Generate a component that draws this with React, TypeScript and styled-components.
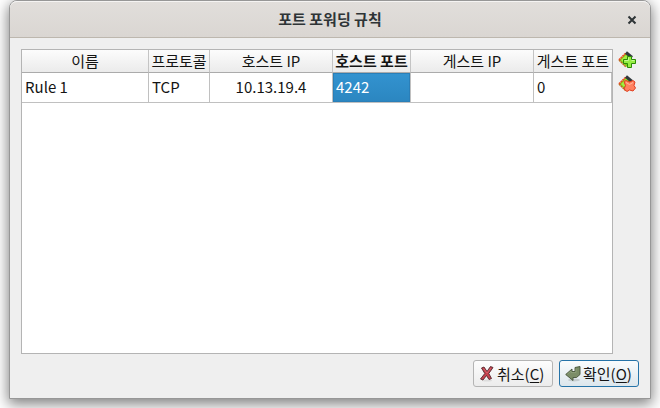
import React from 'react';
import styled, { createGlobalStyle } from 'styled-components';

const Global = createGlobalStyle`
  * { box-sizing: border-box; }
  body {
    margin: 0;
    background: #fff;
    color: #141414;
    font: 15px/20px "Noto Sans CJK KR", sans-serif;
  }
  button { font: inherit; color: inherit; }
`;

const Desktop = styled.div`
  height: 100vh;
  padding: 0 9px 9px;
  overflow: hidden;
`;

const Window = styled.main`
  display: flex;
  flex-direction: column;
  height: 100%;
  border: 1px solid #979797;
  border-radius: 8px 8px 0 0;
  background: #efefef;
  box-shadow: 0 4px 14px 1px rgba(0, 0, 0, 0.5);
`;

const TitleBar = styled.header`
  display: grid;
  grid-template-columns: 36px 1fr 36px;
  align-items: center;
  height: 37px;
  flex: none;
  border-top: 1px solid #f5f4f3;
  border-bottom: 1px solid #bdb7ae;
  border-radius: 7px 7px 0 0;
  background: linear-gradient(#e1dedb, #dad6d2);
`;

const Title = styled.h1`
  margin: 0;
  padding-bottom: 2px;
  text-align: center;
  font-size: 15px;
  line-height: 20px;
  font-weight: 700;
  color: #2e3436;
`;

const CloseButton = styled.button`
  display: grid;
  place-items: center;
  width: 36px;
  height: 32px;
  padding: 0;
  border: 0;
  background: none;
`;

const Content = styled.section`
  display: flex;
  flex: 1;
  min-height: 0;
  padding: 11px 11px 0;
`;

const TableFrame = styled.div`
  flex: 1;
  min-width: 0;
  border: 1px solid #b4b4b4;
  background: #fff;
`;

const RuleTable = styled.table`
  width: 100%;
  table-layout: fixed;
  border-collapse: separate;
  border-spacing: 0;
`;

const HeadCell = styled.th<{ $width?: number; $active?: boolean }>`
  width: ${(p) => (p.$width ? `${p.$width}px` : 'auto')};
  height: 23px;
  padding: 0;
  border-right: 1px solid #c4c4c4;
  border-bottom: 1px solid #ababab;
  background: linear-gradient(#fcfcfc, #ebebeb);
  white-space: nowrap;
  line-height: 20px;
  font-weight: ${(p) => (p.$active ? 700 : 400)};
  &:last-child { border-right: 0; }
`;

const Cell = styled.td<{ $selected?: boolean; $center?: boolean }>`
  height: 30px;
  padding: 0 3px 2px;
  border-right: 1px solid #c0c0c0;
  border-bottom: 1px solid #c0c0c0;
  text-align: ${(p) => (p.$center ? 'center' : 'left')};
  color: ${(p) => (p.$selected ? '#fff' : 'inherit')};
  background: ${(p) => (p.$selected ? 'linear-gradient(#3393d0, #2b86c0)' : '#fff')};
  box-shadow: ${(p) => (p.$selected ? 'inset 0 0 0 1px #2a7fb8' : 'none')};
`;

const Tools = styled.div`
  display: flex;
  flex-direction: column;
  gap: 4px;
  width: 26px;
  padding: 1px 0 0 4px;
`;

const ToolButton = styled.button`
  display: grid;
  place-items: center;
  width: 20px;
  height: 20px;
  padding: 0;
  border: 0;
  background: none;
`;

const Footer = styled.footer`
  display: flex;
  justify-content: flex-end;
  gap: 6px;
  padding: 6px 11px 11px;
`;

const DialogButton = styled.button<{ $primary?: boolean }>`
  display: flex;
  align-items: center;
  gap: 2px;
  width: 80px;
  height: 27px;
  padding: 0 5px;
  white-space: nowrap;
  border: 1px solid ${(p) => (p.$primary ? '#2573a8' : '#b4b4b4')};
  border-radius: 3px;
  background: ${(p) => (p.$primary ? 'linear-gradient(#fafcfd, #dce6ec)' : 'linear-gradient(#fdfdfd, #ececec)')};
`;

const Mnemonic = styled.span`
  text-decoration: underline;
  text-underline-offset: 2px;
`;

function RuleIcon({ remove = false }: { remove?: boolean }) {
  return (
    <svg width="18" height="18" viewBox="0 0 18 18" aria-hidden="true">
      <path d="M1 9 8 2l6 5-5 9Z" fill="#72d80f" />
      <path d="m3 9 5-5 2 2-4 6Z" fill="#a4ec42" />
      <path d="m1 9 7-7" stroke="#ef4a24" strokeWidth="1.8" strokeDasharray="2 .5" />
      <path d="m1 9 7 7" stroke="#bd6a20" strokeWidth="1.5" strokeDasharray="2 .5" />
      <path d="m8 1.500 6 5" stroke="#30383c" strokeWidth="3" />
      {remove ? (
        <>
          <path d="m6 6.500 2-1 3.500 1.500L15 5.500l2 1.500-1 3.500 1.500 2.500-2.500 3-3.500-1L9 16.500l-3-2.500 1.500-3.500Z" fill="#ff8160" stroke="#e23f20" />
          <path d="m8 7.500 3.500 2 3.500-2" fill="none" stroke="#ffb9a0" />
        </>
      ) : (
        <>
          <path d="M9.500 5.500h4v3h4v4h-4v4h-4v-4h-4v-4h4Z" fill="#94ee42" stroke="#2c8a06" />
          <path d="M10.500 6.500v3h-4m7 0h3" fill="none" stroke="#c4fb92" />
        </>
      )}
    </svg>
  );
}

function CancelIcon() {
  return (
    <svg width="16" height="16" viewBox="0 0 16 16" aria-hidden="true">
      <ellipse cx="8" cy="14.500" rx="5" ry="1" fill="#dcdcdc" />
      <path d="M2.500 2 5 1l3 4.500L11.500.5l2.500 1L9.800 7.500l2.700 5-2.500 1L7.500 9.500 4 14l-2.500-1L5.800 7.500Z" fill="#c5414d" stroke="#54272d" strokeWidth=".9" />
      <path d="m4.500 2.500 3.500 4.500L12 2" fill="none" stroke="#df6d75" strokeWidth=".7" />
    </svg>
  );
}

function ConfirmIcon() {
  return (
    <svg width="16" height="16" viewBox="0 0 16 16" aria-hidden="true">
      <ellipse cx="9" cy="14" rx="6" ry="1.500" fill="#c5cdd0" />
      <path d="M10 1.500 15 .5v8L11.500 11.500H8V14.500L.7 8.500 7 3v2.500h3Z" fill="#7b8d67" stroke="#46543a" strokeWidth=".9" />
      <path d="M2.300 8.300 6 5v1.500h5V2.500" fill="none" stroke="#94a580" strokeWidth=".7" />
    </svg>
  );
}

const columns = [
  { label: '이름', width: 127 },
  { label: '프로토콜', width: 61 },
  { label: '호스트 IP' },
  { label: '호스트 포트', width: 78, active: true },
  { label: '게스트 IP' },
  { label: '게스트 포트', width: 78 },
];

const values = ['Rule 1', 'TCP', '10.13.19.4', '4242', '', '0'];

export default function App() {
  return (
    <>
      <Global />
      <Desktop>
        <Window>
          <TitleBar>
            <span />
            <Title>포트 포워딩 규칙</Title>
            <CloseButton aria-label="닫기">
              <svg width="10" height="10" viewBox="0 0 10 10" aria-hidden="true">
                <path d="m1.500 1.500 7 7m0-7-7 7" stroke="#2e3436" strokeWidth="2" />
              </svg>
            </CloseButton>
          </TitleBar>
          <Content>
            <TableFrame>
              <RuleTable>
                <thead>
                  <tr>
                    {columns.map((c) => (
                      <HeadCell key={c.label} scope="col" $width={c.width} $active={c.active}>{c.label}</HeadCell>
                    ))}
                  </tr>
                </thead>
                <tbody>
                  <tr>
                    {values.map((v, i) => (
                      <Cell key={columns[i].label} $selected={i === 3} $center={i === 2}>{v}</Cell>
                    ))}
                  </tr>
                </tbody>
              </RuleTable>
            </TableFrame>
            <Tools>
              <ToolButton aria-label="규칙 추가"><RuleIcon /></ToolButton>
              <ToolButton aria-label="규칙 삭제"><RuleIcon remove /></ToolButton>
            </Tools>
          </Content>
          <Footer>
            <DialogButton><CancelIcon /><span>취소(<Mnemonic>C</Mnemonic>)</span></DialogButton>
            <DialogButton $primary><ConfirmIcon /><span>확인(<Mnemonic>O</Mnemonic>)</span></DialogButton>
          </Footer>
        </Window>
      </Desktop>
    </>
  );
}
